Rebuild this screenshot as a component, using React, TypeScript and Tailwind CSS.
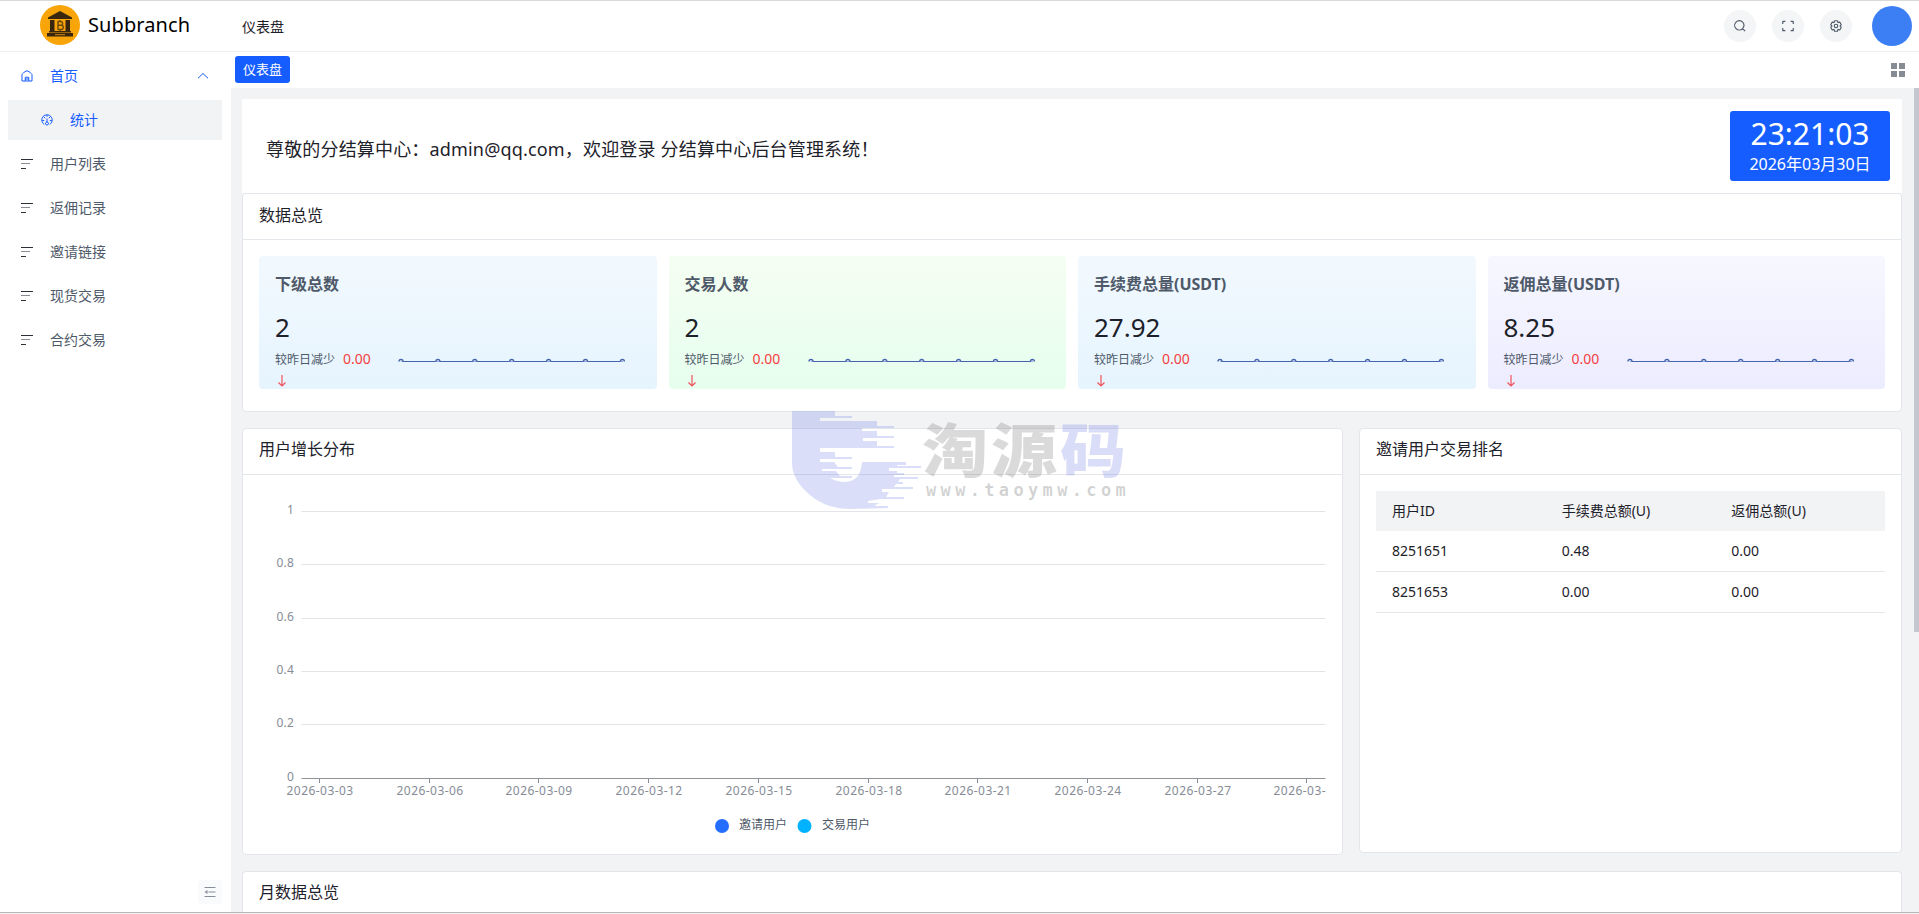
import type { ReactNode } from "react";
import { clsx } from "clsx";

interface StatCard {
  title: string;
  value: string;
  bg: string;
}

const MENU = ["用户列表", "返佣记录", "邀请链接", "现货交易", "合约交易"];

const STATS: StatCard[] = [
  { title: "下级总数", value: "2", bg: "from-[#f2f9fe] to-[#e6f4fe]" },
  { title: "交易人数", value: "2", bg: "from-[#f5fef2] to-[#e6feee]" },
  { title: "手续费总量(USDT)", value: "27.92", bg: "from-[#f2f9fe] to-[#e6f4fe]" },
  { title: "返佣总量(USDT)", value: "8.25", bg: "from-[#f7f7ff] to-[#ececff]" },
];

const RANKING = [
  { id: "8251651", fee: "0.48", rebate: "0.00" },
  { id: "8251653", fee: "0.00", rebate: "0.00" },
];

const X_LABELS = [
  "2026-03-03",
  "2026-03-06",
  "2026-03-09",
  "2026-03-12",
  "2026-03-15",
  "2026-03-18",
  "2026-03-21",
  "2026-03-24",
  "2026-03-27",
  "2026-03-",
];

const Y_AXIS = [
  { label: "1", y: 36.5 },
  { label: "0.8", y: 89.5 },
  { label: "0.6", y: 143.5 },
  { label: "0.4", y: 196.5 },
  { label: "0.2", y: 249.5 },
  { label: "0", y: 303.5 },
];

function Icon({ className, children }: { className?: string; children: ReactNode }) {
  return (
    <svg
      viewBox="0 0 48 48"
      fill="none"
      stroke="currentColor"
      strokeWidth="4"
      className={clsx("shrink-0", className)}
    >
      {children}
    </svg>
  );
}

function Logo() {
  return (
    <svg viewBox="0 0 40 40" className="size-10 shrink-0">
      <circle cx="20" cy="20" r="20" fill="#f7a508" />
      <g fill="#38260f">
        <path d="M20 6 32 12.500v1.500H8V12.500Z" />
        <path d="M10 15h4.500v11H10zM25.500 15H30v11h-4.500zM9 26h22v1.500H9zM7 28h26v3.500H7z" />
      </g>
      <path d="M15 29.700h10" stroke="#d08a10" />
      <path
        d="M17.500 16.500h3.200a1.800 1.800 0 0 1 0 3.800h-2.500m0 0h3a1.900 1.900 0 0 1 0 4.200h-3.700M18 16.500v8M20 15v1.500M20 24.500V26"
        fill="none"
        stroke="#6d4910"
        strokeWidth="1.400"
      />
    </svg>
  );
}

function MenuLines() {
  return (
    <svg viewBox="0 0 12 12" className="size-3 shrink-0" shapeRendering="crispEdges">
      <path d="M0 1.500h12" stroke="#2b3038" />
      <path d="M0 5.500h9" stroke="#878c94" />
      <path d="M0 10.500h5" stroke="#2b3038" />
    </svg>
  );
}

function Header() {
  return (
    <header className="flex h-[51px] shrink-0 items-center border-b border-[#eceef1] bg-white pr-[7px]">
      <div className="flex w-[242px] items-center gap-2 pb-0.5 pl-10">
        <Logo />
        <span className="text-xl tracking-[0.1px] text-black">Subbranch</span>
      </div>
      <span className="pt-0.5 text-sm text-[#1d2129]">仪表盘</span>
      <div className="ml-auto flex items-center gap-4 text-[#4e5969]">
        <span className="grid size-8 place-items-center rounded-full bg-[#f4f5f6]">
          <Icon className="size-3.5">
            <path d="M33.072 33.071c6.248-6.248 6.248-16.379 0-22.627-6.249-6.249-16.380-6.249-22.628 0-6.248 6.248-6.248 16.379 0 22.627 6.248 6.248 16.380 6.248 22.628 0Zm0 0 8.485 8.485" />
          </Icon>
        </span>
        <span className="grid size-8 place-items-center rounded-full bg-[#f4f5f6]">
          <Icon className="size-3.5">
            <path d="M42 17V9a1 1 0 0 0-1-1h-8M6 17V9a1 1 0 0 1 1-1h8m27 23v8a1 1 0 0 1-1 1h-8M6 31v8a1 1 0 0 0 1 1h8" />
          </Icon>
        </span>
        <span className="grid size-8 place-items-center rounded-full bg-[#f4f5f6]">
          <Icon className="size-3.5">
            <path d="M18.797 6.732A1 1 0 0 1 19.760 6h8.480a1 1 0 0 1 .964.732l1.285 4.628a1 1 0 0 0 1.213.700l4.651-1.200a1 1 0 0 1 1.116.468l4.240 7.344a1 1 0 0 1-.153 1.200L38.193 23.300a1 1 0 0 0 0 1.402l3.364 3.427a1 1 0 0 1 .153 1.200l-4.240 7.344a1 1 0 0 1-1.116.468l-4.650-1.200a1 1 0 0 0-1.214.700l-1.285 4.628a1 1 0 0 1-.964.732h-8.480a1 1 0 0 1-.963-.732L17.510 36.640a1 1 0 0 0-1.213-.700l-4.650 1.200a1 1 0 0 1-1.116-.468l-4.240-7.344a1 1 0 0 1 .153-1.200L9.809 24.700a1 1 0 0 0 0-1.402l-3.364-3.427a1 1 0 0 1-.153-1.200l4.240-7.344a1 1 0 0 1 1.116-.468l4.650 1.200a1 1 0 0 0 1.213-.700l1.286-4.628Z" />
            <path d="M30 24a6 6 0 1 1-12 0 6 6 0 0 1 12 0Z" />
          </Icon>
        </span>
        <span className="ml-1 size-10 rounded-full bg-[#3c7ff5]" />
      </div>
    </header>
  );
}

function Sidebar() {
  return (
    <aside className="flex w-[231px] shrink-0 flex-col bg-white px-2 pt-1 pb-2">
      <div className="flex h-10 items-center pr-3.5 pl-[13px] text-sm text-[#165dff]">
        <Icon className="mr-[17px] size-3">
          <path d="M4 18 Q5 15 10 11 L20 4.500 Q24 2 28 4.500 L38 11 Q43 15 44 18 V44 H4Z" />
          <path d="M17 44V29h14v15M17 36h14" />
        </Icon>
        首页
        <Icon className="ml-auto size-3">
          <path d="M4 33 24 14l20 19" />
        </Icon>
      </div>
      <div className="mt-1 mr-px flex h-10 items-center bg-[#f2f3f5] pl-[33px] text-sm text-[#165dff]">
        <Icon className="mr-[17px] size-3">
          <path d="M13 42A21 21 0 1 1 35 42" />
          <path d="M24 4v7M5 26h8M43 26h-8M11 11l6 6M37 11l-6 6M24 18v14" />
          <circle cx="24" cy="38" r="6" />
        </Icon>
        统计
      </div>
      <nav className="mt-1 flex flex-col gap-1">
        {MENU.map((item) => (
          <div
            key={item}
            className="flex h-10 items-center gap-[17px] pl-[13px] text-sm text-[#4e5969]"
          >
            <MenuLines />
            {item}
          </div>
        ))}
      </nav>
      <button className="mt-auto mr-px grid size-6 place-items-center self-end rounded-sm bg-[#f9fafb] text-[#868d99]">
        <svg viewBox="0 0 12 12" className="size-3" stroke="currentColor" fill="none">
          <path d="M.5 1.500h11M4.500 6h7M.5 10.500h11" />
          <path d="M3.500 4v4L.5 6Z" fill="currentColor" stroke="none" />
        </svg>
      </button>
    </aside>
  );
}

function TagBar() {
  return (
    <div className="flex h-9 shrink-0 items-center bg-white pr-3.5 pl-1">
      <span className="-mt-[1px] flex h-[27px] items-center rounded-[3px] bg-[#165dff] px-2 text-[13px] text-white">
        仪表盘
      </span>
      <span className="ml-auto grid grid-cols-2 gap-0.5">
        {[0, 1, 2, 3].map((n) => (
          <i key={n} className="size-1.5 bg-[#868b94]" />
        ))}
      </span>
    </div>
  );
}

function Card({
  title,
  className,
  titleClass = "pb-[5px]",
  children,
}: {
  title: string;
  className?: string;
  titleClass?: string;
  children?: ReactNode;
}) {
  return (
    <section className={clsx("rounded-sm border border-[#e5e6eb] bg-white", className)}>
      <h2
        className={clsx(
          "flex h-[46px] items-center border-b border-[#e5e6eb] px-4 text-base text-[#1d2129]",
          titleClass,
        )}
      >
        {title}
      </h2>
      {children}
    </section>
  );
}

function Sparkline() {
  return (
    <svg width="230" height="12" className="mt-3 overflow-hidden">
      <path d="M5 5.500h222" stroke="#4565ae" strokeWidth="1.200" />
      {[0, 1, 2, 3, 4, 5, 6].map((n) => (
        <path
          key={n}
          d={`M${3 + n * 36.9} 5.500a2 2 0 0 1 4 0`}
          fill="#eef5ff"
          stroke="#4565ae"
          strokeWidth="1.400"
        />
      ))}
    </svg>
  );
}

function Stat({ title, value, bg }: StatCard) {
  return (
    <div className={clsx("h-[133px] rounded-sm bg-linear-to-b px-4 pt-3.5", bg)}>
      <div className="text-base leading-7 font-bold text-[#4e5969]">{title}</div>
      <div className="mt-[13px] mb-px text-[26px] leading-8 text-[#1d2129]">{value}</div>
      <div className="flex gap-5">
        <div className="w-[101px] shrink-0 pt-1 text-xs leading-[22px] text-[#4e5969]">
          <div className="flex gap-2">
            <span className="pt-px">较昨日减少</span>
            <span className="text-sm leading-[22px] text-[#f53f3f]">0.00</span>
          </div>
          <svg
            viewBox="0 0 14 14"
            className="mt-[3px] size-3.5"
            fill="none"
            stroke="#f0525c"
            strokeWidth="1.200"
          >
            <path d="M7 1v11M3.500 8.500 7 12l3.500-3.500" />
          </svg>
        </div>
        <Sparkline />
      </div>
    </div>
  );
}

function GrowthChart() {
  return (
    <svg width="1098" height="378" className="block">
      {Y_AXIS.map(({ label, y }) => (
        <g key={label}>
          <path d={`M58.500 ${y}h1024`} stroke={label === "0" ? "#8e9196" : "#e3e4e8"} />
          <text
            x="51"
            y={y + 2.5}
            textAnchor="end"
            fontSize="12"
            letterSpacing="0.200"
            fill="#868c96"
          >
            {label}
          </text>
        </g>
      ))}
      {X_LABELS.map((label, i) => {
        const x = 76.5 + Math.round(i * 109.7);
        return (
          <g key={label}>
            <path d={`M${x} 304v4`} stroke="#868c96" />
            <text x={x - 33} y="320" fontSize="12" letterSpacing="0.450" fill="#868c96">
              {label}
            </text>
          </g>
        );
      })}
      <circle cx="479" cy="351" r="7" fill="#246eff" />
      <text x="496" y="354" fontSize="12" fill="#4e5969">
        邀请用户
      </text>
      <circle cx="561.500" cy="351" r="7" fill="#00b2ff" />
      <text x="579" y="354" fontSize="12" fill="#4e5969">
        交易用户
      </text>
    </svg>
  );
}

function RankingTable() {
  return (
    <div className="px-4 pt-4 text-sm text-[#1d2129]">
      <div className="grid h-10 grid-cols-3 items-center bg-[#f2f3f5] *:pl-4">
        <span>用户ID</span>
        <span>手续费总额(U)</span>
        <span>返佣总额(U)</span>
      </div>
      {RANKING.map((row) => (
        <div
          key={row.id}
          className="grid h-[41px] grid-cols-3 items-center border-b border-[#e5e6eb] *:pl-4"
        >
          <span>{row.id}</span>
          <span>{row.fee}</span>
          <span>{row.rebate}</span>
        </div>
      ))}
    </div>
  );
}

function Watermark() {
  return (
    <div className="pointer-events-none absolute top-[410px] left-[790px] flex w-[340px]">
      <svg viewBox="0 0 134 100" className="h-[100px] w-[134px] shrink-0">
        <path
          fill="#5064dc"
          fillOpacity="0.21"
          d="M2 0H45V5H62V7H30V10H87V15H104V17H72V20H87V25H104V27H73V30H87V35H104V37H30V41H45V46H62V48H30V51H44L48 56H62V58H32V60H46L50 65H62V67H40Q47 71 55 71Q71 70 72 51H116V54H107V55H131V57H99V60H107V62H114V64H104V66H128V68H110L108 71H113V73H106L104 76H123V78H92V81H99L96 86H114V88H90L78 90V92H89L84 95H98V97L62 98Q36 98 20 84Q2 69 2 52Z"
        />
      </svg>
      <div className="w-[206px] pt-1.5">
        <div className="flex h-[66px] origin-top scale-y-[0.88] gap-[3px] font-['Noto_Sans_CJK_SC',sans-serif] text-[66px] leading-[66px] font-black text-[#606060]/23">
          <span className="-ml-0.5">淘</span>
          <span>源</span>
          <span className="text-[#5064dc]/22">码</span>
        </div>
        <div className="-mt-[3px] pl-0.5 font-['DejaVu_Sans_Mono',monospace] text-[17px] leading-5 font-bold tracking-[4.34px] whitespace-nowrap text-[#606060]/28">
          www.taoymw.com
        </div>
      </div>
    </div>
  );
}

export default function App() {
  return (
    <div className="relative flex h-[914px] w-[1919px] flex-col overflow-hidden border-t border-[#d9d9d9] bg-white font-['Noto_Sans','Noto_Sans_CJK_SC',sans-serif]">
      <Header />
      <div className="flex h-[860px] shrink-0">
        <Sidebar />
        <div className="flex min-w-0 grow flex-col">
          <TagBar />
          <div className="flex min-h-0 grow overflow-hidden bg-[#f2f3f5]">
            <main className="ml-[11px] w-[1660px] pt-[11px]">
              <div className="flex h-[94px] items-center bg-white pr-3 pl-6">
                <p className="pt-2 pb-0.5 text-lg tracking-[0.17px] text-[#1d2129]">
                  尊敬的分结算中心：admin@qq.com，欢迎登录 分结算中心后台管理系统！
                </p>
                <div className="ml-auto flex h-[70px] w-40 flex-col items-center rounded-[3px] bg-[#165dff] pt-1 text-white">
                  <span className="text-[30px] leading-[38px]">23:21:03</span>
                  <span className="text-base leading-[22px]">2026年03月30日</span>
                </div>
              </div>

              <Card title="数据总览" className="h-[219px]" titleClass="pb-[3px]">
                <div className="grid grid-cols-4 gap-3 px-4 pt-4">
                  {STATS.map((stat) => (
                    <Stat key={stat.title} {...stat} />
                  ))}
                </div>
              </Card>

              <div className="mt-4 flex items-start gap-4">
                <Card title="用户增长分布" className="h-[427px] w-[1101px] overflow-hidden">
                  <GrowthChart />
                </Card>
                <Card title="邀请用户交易排名" className="h-[425px] grow">
                  <RankingTable />
                </Card>
              </div>

              <Card title="月数据总览" className="mt-4" />
            </main>
            {/* 滚动条 */}
            <div className="ml-auto h-[544px] w-[5px] bg-[#c5c8ce]" />
          </div>
        </div>
      </div>
      <div className="h-0.5 shrink-0 border-t border-[#b8b8b8] bg-[#f0f0f0]" />
      <Watermark />
    </div>
  );
}
